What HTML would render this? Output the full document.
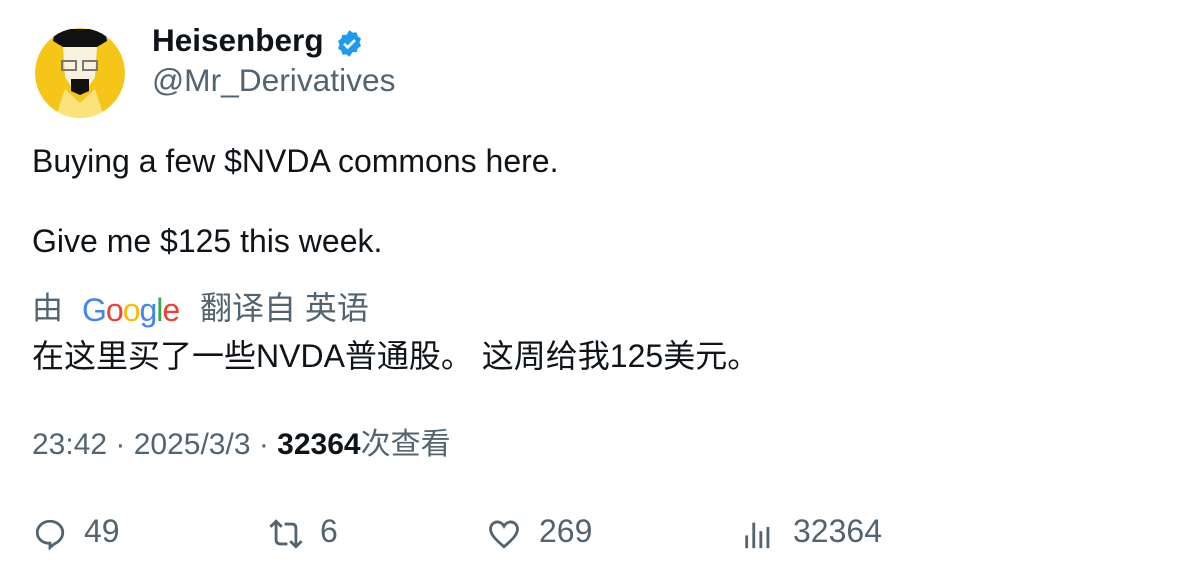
<!DOCTYPE html>
<html><head><meta charset="utf-8"><style>
body{margin:0;width:1196px;height:578px;background:#fff;font-family:"Liberation Sans","Noto Sans CJK SC",sans-serif;position:relative;overflow:hidden;color:#0f1419}
.a{position:absolute;white-space:nowrap}
.g{color:#536471}
</style></head><body>
<svg class="a" style="left:35px;top:27px" width="90" height="92" viewBox="0 0 90 92">
<defs><clipPath id="c"><circle cx="45" cy="46" r="45"/></clipPath></defs>
<g clip-path="url(#c)">
<circle cx="45" cy="46" r="45" fill="#f5c518"/>
<path d="M28 20 L62 20 L60 50 L52 62 L38 62 L30 50Z" fill="#f8f1dc"/>
<path d="M20 2 L70 2 L72 14 L62 20 L28 20 L18 14Z" fill="#111"/>
<rect x="27" y="34" width="14" height="9" fill="none" stroke="#777" stroke-width="2"/>
<rect x="48" y="34" width="14" height="9" fill="none" stroke="#777" stroke-width="2"/>
<path d="M36 52 L54 52 L54 64 L45 68 L36 64Z" fill="#111"/>
<path d="M20 92 L30 62 L45 76 L60 62 L70 92Z" fill="#fbe27a"/>
</g>
</svg>
<div class="a" style="left:152px;top:22px;font-size:31.5px;font-weight:bold">Heisenberg</div>
<svg class="a" style="left:335px;top:29px" width="29" height="29" viewBox="0 0 24 24"><path fill="#1d9bf0" d="M12 1l2.6 2 3.3-.2.9 3.2 2.7 1.9-1.2 3.1 1.2 3.1-2.7 1.9-.9 3.2-3.3-.2L12 23l-2.6-2-3.3.2-.9-3.2-2.7-1.9L3.7 13 2.5 9.9l2.7-1.9.9-3.2 3.3.2z"/><path d="M7.5 12.2l3 3 6-6" fill="none" stroke="#fff" stroke-width="2.2"/></svg>
<div class="a g" style="left:152px;top:62px;font-size:31.7px">@Mr_Derivatives</div>
<div class="a" style="left:32px;top:143px;font-size:32px">Buying a few $NVDA commons here.</div>
<div class="a" style="left:32px;top:223px;font-size:32px">Give me $125 this week.</div>
<div class="a g" style="left:32px;top:283px;font-size:31px">由</div>
<div class="a" style="left:82px;top:292px;font-size:32px;letter-spacing:-1px"><span style="color:#4285f4">G</span><span style="color:#ea4335">o</span><span style="color:#fbbc05">o</span><span style="color:#4285f4">g</span><span style="color:#34a853">l</span><span style="color:#ea4335">e</span></div>
<div class="a g" style="left:200px;top:283px;font-size:32px">翻译自 英语</div>
<div class="a" style="left:32px;top:331px;font-size:32px">在这里买了一些NVDA普通股。 这周给我125美元。</div>
<div class="a g" style="left:32px;top:419px;font-size:30px">23:42 · 2025/3/3 · <b style="color:#0f1419">32364</b>次查看</div>
<svg class="a" style="left:33px;top:517px" width="34" height="34" viewBox="0 0 24 24" fill="none" stroke="#536471" stroke-width="2"><path d="M12 3C7 3 3 6.5 3 11c0 4 3.5 7.5 8 7.5h1v3l3-2.5c3.5-1.5 6-4.5 6-8C21 6.5 17 3 12 3z"/></svg>
<div class="a g" style="left:84px;top:513px;font-size:32px">49</div>
<svg class="a" style="left:267px;top:517px" width="38" height="34" viewBox="0 0 26 24" fill="none" stroke="#536471" stroke-width="2"><path d="M2 7l4-4 4 4M6 3v13c0 2 1 3 3 3h5M24 17l-4 4-4-4M20 21V8c0-2-1-3-3-3h-5"/></svg>
<div class="a g" style="left:320px;top:513px;font-size:32px">6</div>
<svg class="a" style="left:487px;top:517px" width="34" height="34" viewBox="0 0 24 24" fill="none" stroke="#536471" stroke-width="2"><path d="M12 21C5 15 2.5 12 2.5 8.5 2.5 5.5 4.8 3.5 7.3 3.5c2 0 3.5 1 4.7 3 1.2-2 2.7-3 4.7-3 2.5 0 4.8 2 4.8 5 0 3.5-2.5 6.5-9.5 12.5z"/></svg>
<div class="a g" style="left:539px;top:513px;font-size:32px">269</div>
<svg class="a" style="left:741px;top:517px" width="34" height="34" viewBox="0 0 24 24" fill="#536471"><rect x="3" y="13" width="2" height="9"/><rect x="8" y="4" width="2" height="18"/><rect x="13" y="10" width="2" height="12"/><rect x="18" y="7" width="2" height="15"/></svg>
<div class="a g" style="left:793px;top:513px;font-size:32px">32364</div>
</body></html>
